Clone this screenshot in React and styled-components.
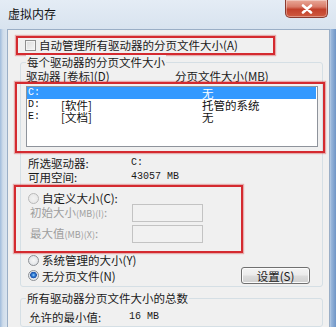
import React from 'react'
import styled, { createGlobalStyle } from 'styled-components'

const GlobalStyle = createGlobalStyle`
  html, body {
    margin: 0;
    padding: 0;
    background: #d3e0ee;
  }
  body {
    font-family: "Noto Sans CJK SC", "Noto Sans", sans-serif;
    font-size: 11.5px;
    color: #1a1a1a;
  }
`

const drives = [
  { letter: 'C:', label: '', size: '无', selected: true },
  { letter: 'D:', label: '[软件]', size: '托管的系统' },
  { letter: 'E:', label: '[文档]', size: '无' }
]

const App = () => {
  return (
    <Window>
      <GlobalStyle />
      <TitleBar>
        <Title>虚拟内存</Title>
        <CloseButton>
          <svg width="14" height="10" viewBox="0 0 14 10">
            <path
              d="M3 1.5 L11 8.5 M11 1.5 L3 8.5"
              stroke="#fff"
              strokeWidth="2.6"
              strokeLinecap="round"
            />
          </svg>
        </CloseButton>
      </TitleBar>

      <Client>
        <Highlight $w={259} $h={19} $ml={8} $mt={6}>
          <CheckRow>
            <CheckBox />
            <span>自动管理所有驱动器的分页文件大小(A)</span>
          </CheckRow>
        </Highlight>

        <GroupBox $mt={7}>
          <Legend>每个驱动器的分页文件大小</Legend>
          <HeaderRow>
            <HeaderDrive>驱动器 [卷标](D)</HeaderDrive>
            <span>分页文件大小(MB)</span>
          </HeaderRow>

          <Highlight $w={310} $h={71} $ml={-11} $mt={0}>
            <ListBox>
              {drives.map((d) => (
                <ListRow key={d.letter} $selected={d.selected}>
                  <DriveCol>{d.letter}</DriveCol>
                  <LabelCol>{d.label}</LabelCol>
                  <span>{d.size}</span>
                </ListRow>
              ))}
            </ListBox>
          </Highlight>

          <InfoBlock>
            <InfoRow>
              <InfoLabel>所选驱动器:</InfoLabel>
              <Mono>C:</Mono>
            </InfoRow>
            <InfoRow>
              <InfoLabel>可用空间:</InfoLabel>
              <Mono>43057 MB</Mono>
            </InfoRow>
          </InfoBlock>

          <Highlight $w={229} $h={68} $ml={-12} $mt={1}>
            <CustomBlock>
              <RadioRow $h={12}>
                <Radio $disabled />
                <span>自定义大小(C):</span>
              </RadioRow>
              <SizeRow>
                <SizeLabel>
                  初始大小<Small>(MB)(I)</Small>:
                </SizeLabel>
                <SizeInput />
              </SizeRow>
              <SizeRow $mt={3}>
                <SizeLabel>
                  最大值<Small>(MB)(X)</Small>:
                </SizeLabel>
                <SizeInput />
              </SizeRow>
            </CustomBlock>
          </Highlight>

          <RadioRow $h={12} $mt={1}>
            <Radio />
            <span>系统管理的大小(Y)</span>
          </RadioRow>
          <LastRow>
            <RadioRow $h={17}>
              <Radio $checked />
              <span>无分页文件(N)</span>
            </RadioRow>
            <Button>设置(S)</Button>
          </LastRow>
        </GroupBox>

        <GroupBox $mt={11}>
          <Legend>所有驱动器分页文件大小的总数</Legend>
          <TotalRow>
            <TotalLabel>允许的最小值:</TotalLabel>
            <Mono>16 MB</Mono>
          </TotalRow>
        </GroupBox>
      </Client>
    </Window>
  )
}

const Window = styled.div`
  width: 336px;
  height: 327px;
  overflow: hidden;
  display: flex;
  flex-direction: column;
  padding: 0 6px 0 7px;
  box-sizing: border-box;
  background: linear-gradient(
    90deg,
    #9fbbdc 0px,
    #cfdcea 3px,
    #d9e4f0 7px,
    #dde7f2 calc(100% - 7px),
    #9ab8dc calc(100% - 5px),
    #6e95c7 100%
  );
`

const TitleBar = styled.div`
  height: 29px;
  flex: none;
  display: flex;
  align-items: flex-start;
  background: linear-gradient(180deg, #e4ecf5 0%, #d8e3ef 100%);
  margin: 0 -6px 0 -7px;
  padding: 0 8px 0 8px;
`

const Title = styled.div`
  padding-top: 7px;
  font-size: 12px;
  line-height: 14px;
  color: #111;
`

const CloseButton = styled.div`
  margin-left: auto;
  width: 43px;
  height: 18px;
  box-sizing: border-box;
  display: flex;
  align-items: center;
  justify-content: center;
  border: 1px solid #8a3a2f;
  border-top: none;
  border-radius: 0 0 5px 5px;
  background: linear-gradient(
    180deg,
    #e9a898 0%,
    #d97b69 40%,
    #c2402b 55%,
    #cf5a40 100%
  );
  box-shadow: inset 0 0 0 1px rgba(255, 255, 255, 0.35);
`

const Client = styled.div`
  flex: 1;
  display: flex;
  flex-direction: column;
  background: #f0f0f0;
  border: 1px solid #9aaec6;
  border-bottom: none;
`

const Highlight = styled.div`
  width: ${(p) => p.$w}px;
  height: ${(p) => p.$h}px;
  margin-left: ${(p) => p.$ml}px;
  margin-top: ${(p) => p.$mt}px;
  box-sizing: border-box;
  border: 2px solid #d42a2f;
  box-shadow: 0 0 1px 1px rgba(212, 42, 47, 0.35);
  flex: none;
`

const CheckRow = styled.div`
  display: flex;
  align-items: center;
  height: 15px;
  padding-left: 7px;
  gap: 3px;
  line-height: 15px;
`

const CheckBox = styled.div`
  width: 11px;
  height: 11px;
  box-sizing: border-box;
  border: 1px solid #8f8f8f;
  background: linear-gradient(135deg, #dcdcdc 0%, #f6f6f6 100%);
  box-shadow: inset 0 0 0 1px #f4f4f4;
`

const GroupBox = styled.div`
  position: relative;
  width: 303px;
  margin-left: 12px;
  margin-top: ${(p) => p.$mt}px;
  box-sizing: border-box;
  border: 1px solid #d5dfe5;
  border-radius: 3px;
  padding: 0 0 2px 5px;
  display: flex;
  flex-direction: column;
  flex: none;
`

const Legend = styled.div`
  position: absolute;
  top: -8px;
  left: 5px;
  padding: 0 1px;
  line-height: 14px;
  background: #f0f0f0;
`

const HeaderRow = styled.div`
  display: flex;
  margin-top: 8px;
  height: 11px;
  line-height: 11px;
`

const HeaderDrive = styled.span`
  width: 149px;
`

const ListBox = styled.div`
  margin: 2px 0 0 9px;
  width: 292px;
  height: 61px;
  box-sizing: border-box;
  border: 1px solid #8e939b;
  background: #fff;
  display: flex;
  flex-direction: column;
`

const ListRow = styled.div`
  display: flex;
  height: 12px;
  line-height: 12px;
  padding-left: 1px;
  margin-right: 1px;
  background: ${(p) => (p.$selected ? '#3399ff' : 'transparent')};
  color: ${(p) => (p.$selected ? '#fff' : '#111')};
`

const DriveCol = styled.span`
  width: 33px;
  font-family: "Liberation Mono", monospace;
  font-size: 10px;
`

const LabelCol = styled.span`
  width: 141px;
`

const InfoBlock = styled.div`
  margin-top: 3px;
  display: flex;
  flex-direction: column;
  padding-left: 2px;
`

const InfoRow = styled.div`
  display: flex;
  align-items: center;
  height: 14px;
  line-height: 14px;
`

const InfoLabel = styled.span`
  width: 103px;
`

const Mono = styled.span`
  font-family: "Liberation Mono", monospace;
  font-size: 10px;
`

const CustomBlock = styled.div`
  display: flex;
  flex-direction: column;
  padding-top: 5px;
`

const RadioRow = styled.div`
  display: flex;
  align-items: center;
  gap: 3px;
  height: ${(p) => p.$h}px;
  margin-top: ${(p) => p.$mt || 0}px;
  padding-left: ${(p) => (p.$inset ? 12 : 2)}px;
  line-height: 12px;
  ${CustomBlock} & {
    padding-left: 12px;
  }
`

const Radio = styled.div`
  width: 11px;
  height: 11px;
  box-sizing: border-box;
  border-radius: 50%;
  border: 1px solid ${(p) => (p.$disabled ? '#b9b9b9' : '#8c8f94')};
  background: ${(p) =>
    p.$checked
      ? 'radial-gradient(circle at 50% 45%, #9fd0ff 0, #2f7fd6 1.5px, #1c4fa8 3px, #dfe6ee 3.6px, #f4f4f4 100%)'
      : p.$disabled
      ? 'radial-gradient(circle at 50% 50%, #f2f2f2 0, #e4e4e4 100%)'
      : 'radial-gradient(circle at 50% 50%, #f7f7f7 0, #d9dde2 100%)'};
`

const SizeRow = styled.div`
  display: flex;
  align-items: center;
  height: 18px;
  margin-top: ${(p) => p.$mt || 0}px;
  padding-left: 14px;
`

const SizeLabel = styled.span`
  width: 102px;
  color: #9e9e9e;
  line-height: 14px;
`

const Small = styled.span`
  font-size: 9px;
`

const SizeInput = styled.div`
  width: 71px;
  height: 18px;
  box-sizing: border-box;
  border: 1px solid #c3c3c3;
  background: #f1f1f1;
`

const LastRow = styled.div`
  display: flex;
  align-items: center;
  justify-content: space-between;
  margin-top: 1px;
  padding-right: 12px;
`

const Button = styled.div`
  width: 69px;
  height: 17px;
  box-sizing: border-box;
  display: flex;
  align-items: center;
  justify-content: center;
  border: 1px solid #707070;
  border-radius: 3px;
  background: linear-gradient(
    180deg,
    #f4f4f4 0%,
    #ebebeb 48%,
    #dddddd 52%,
    #cfcfcf 100%
  );
  box-shadow: inset 0 0 0 1px #fbfbfb;
  line-height: 12px;
`

const TotalRow = styled.div`
  display: flex;
  align-items: center;
  height: 14px;
  line-height: 14px;
  margin-top: 11px;
  padding-left: 3px;
`

const TotalLabel = styled.span`
  width: 100px;
`

export default App
